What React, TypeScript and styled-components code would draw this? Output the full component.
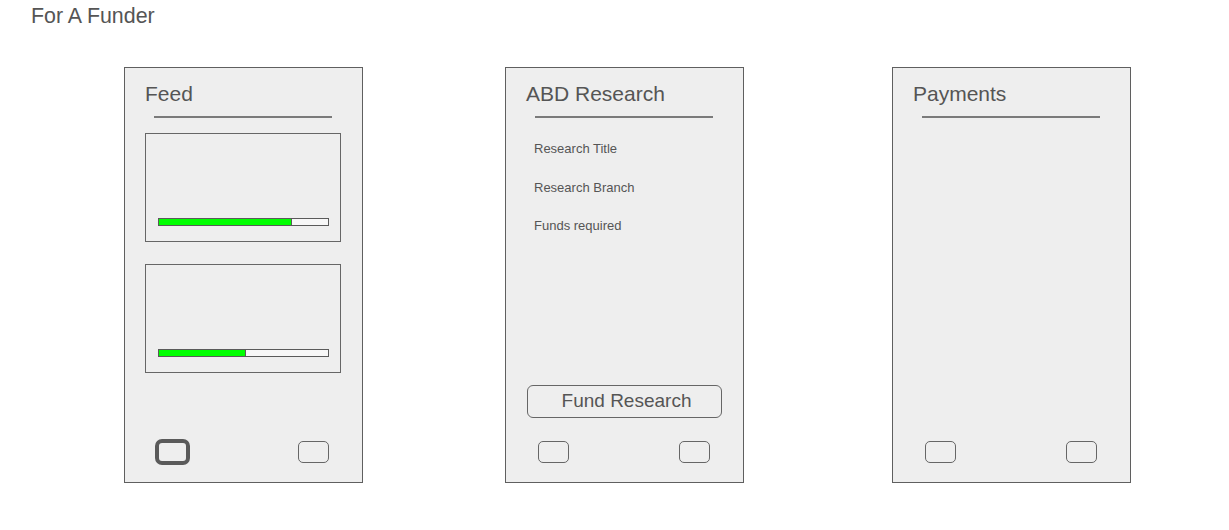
import React from "react";
import styled, { createGlobalStyle } from "styled-components";

const Global = createGlobalStyle`
  html, body { margin: 0; padding: 0; background: #ffffff; }
  body { font-family: "Liberation Sans", Arial, sans-serif; color: #555555; }
`;

const Page = styled.div`
  width: 1229px;
  height: 530px;
  display: flex;
  flex-direction: column;
  box-sizing: border-box;
  padding-top: 4px;
`;

const PageTitle = styled.h1`
  margin: 0 0 0 31px;
  font-size: 21.4px;
  line-height: 24px;
  font-weight: 400;
  color: #555555;
`;

const Row = styled.div`
  display: grid;
  grid-template-columns: 381px 387px 239px;
  margin-top: 39px;
  padding-left: 124px;
`;

const Phone = styled.section`
  box-sizing: border-box;
  width: 239px;
  height: 416px;
  border: 1px solid #5f5f5f;
  background: #eeeeee;
  display: flex;
  flex-direction: column;
  padding: 14px 0 19px;
`;

const PhoneTitle = styled.h2`
  margin: 0 0 0 20px;
  font-size: 21px;
  line-height: 24px;
  font-weight: 400;
  color: #555555;
`;

const Divider = styled.div`
  margin: 10px 0 0 29px;
  width: 178px;
  height: 2px;
  background: #7a7a7a;
`;

const CardList = styled.div`
  display: flex;
  flex-direction: column;
  gap: 22px;
  margin: 15px 0 0 20px;
`;

const Card = styled.div`
  box-sizing: border-box;
  width: 196px;
  height: 109px;
  border: 1px solid #666666;
  display: flex;
  flex-direction: column;
  justify-content: flex-end;
  padding: 0 11px 15px 12px;
`;

const Bar = styled.div`
  box-sizing: border-box;
  width: 171px;
  height: 8px;
  border: 1px solid #5a5a5a;
  background: #f7f7f7;
  display: flex;
`;

const BarFill = styled.div`
  height: 100%;
  background: #00ff00;
  border-right: 1px solid #5a5a5a;
`;

const Fields = styled.div`
  display: flex;
  flex-direction: column;
  gap: 23.5px;
  margin: 23px 0 0 28px;
`;

const Field = styled.div`
  font-size: 13px;
  line-height: 15px;
  color: #555555;
`;

const ActionButton = styled.button`
  box-sizing: border-box;
  margin: auto 0 0 21px;
  width: 195px;
  height: 33px;
  border: 1px solid #666666;
  border-radius: 6px;
  background: #eeeeee;
  font-family: "Liberation Sans", Arial, sans-serif;
  font-size: 19px;
  color: #555555;
  padding: 0 0 2px 4px;
`;

const Nav = styled.nav<{ $push: boolean }>`
  display: flex;
  justify-content: space-between;
  align-items: center;
  padding: 0 33px 0 32px;
  margin-top: ${(p) => (p.$push ? "auto" : "23px")};
`;

const NavButton = styled.div<{ $active?: boolean }>`
  box-sizing: border-box;
  width: ${(p) => (p.$active ? "35px" : "31px")};
  height: ${(p) => (p.$active ? "26px" : "22px")};
  margin: ${(p) => (p.$active ? "-2px" : "0")};
  border: ${(p) => (p.$active ? "4px solid #5a5a5a" : "1px solid #666666")};
  border-radius: ${(p) => (p.$active ? "7px" : "5px")};
  background: #eeeeee;
`;

const feed = [78, 51];

export default function App() {
  return (
    <>
      <Global />
      <Page>
        <PageTitle>For A Funder</PageTitle>
        <Row>
          <Phone>
            <PhoneTitle>Feed</PhoneTitle>
            <Divider />
            <CardList>
              {feed.map((pct, i) => (
                <Card key={i}>
                  <Bar>
                    <BarFill style={{ width: `${pct}%` }} />
                  </Bar>
                </Card>
              ))}
            </CardList>
            <Nav $push>
              <NavButton $active />
              <NavButton />
            </Nav>
          </Phone>

          <Phone>
            <PhoneTitle>ABD Research</PhoneTitle>
            <Divider />
            <Fields>
              <Field>Research Title</Field>
              <Field>Research Branch</Field>
              <Field>Funds required</Field>
            </Fields>
            <ActionButton>Fund Research</ActionButton>
            <Nav $push={false}>
              <NavButton />
              <NavButton />
            </Nav>
          </Phone>

          <Phone>
            <PhoneTitle>Payments</PhoneTitle>
            <Divider />
            <Nav $push>
              <NavButton />
              <NavButton />
            </Nav>
          </Phone>
        </Row>
      </Page>
    </>
  );
}
